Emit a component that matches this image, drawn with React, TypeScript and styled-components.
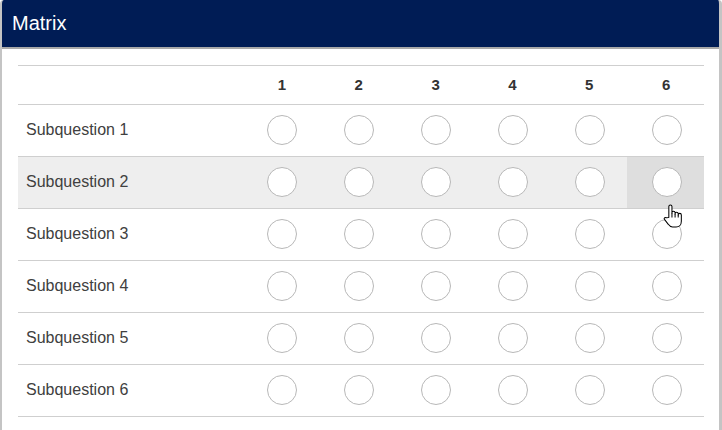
import React from "react";
import styled, { createGlobalStyle } from "styled-components";

const GlobalStyle = createGlobalStyle`
  html, body {
    margin: 0;
    padding: 0;
    background: #ffffff;
    font-family: "Liberation Sans", Arial, sans-serif;
  }
`;

const Panel = styled.div`
  width: 722px;
  height: 430px;
  box-sizing: border-box;
  border-left: 2px solid #c4c4c4;
  border-right: 3px solid #c4c4c4;
  border-radius: 4px 4px 0 0;
  overflow: hidden;
  background: #ffffff;
`;

const Header = styled.div`
  height: 47px;
  background: #001c55;
  border-bottom: 2px solid #a9a9a9;
  display: flex;
  align-items: center;
  padding-left: 10px;
  color: #ffffff;
  font-size: 20px;
`;

const Body = styled.div`
  padding: 16px 15px 0 16px;
`;

const Table = styled.table`
  width: 686px;
  border-collapse: collapse;
  table-layout: fixed;
  border-top: 1px solid #cfcfcf;
`;

const HeadCell = styled.th`
  height: 37px;
  font-size: 15px;
  font-weight: bold;
  color: #333333;
  text-align: center;
  vertical-align: middle;
  padding: 0 0 1px 1px;
  border-bottom: 1px solid #cfcfcf;
`;

const Row = styled.tr<{ $active?: boolean }>`
  background: ${({ $active }) => ($active ? "#eeeeee" : "transparent")};
`;

const LabelCell = styled.td`
  height: 49px;
  padding: 0 0 2px 8px;
  font-size: 16px;
  color: #404040;
  border-bottom: 1px solid #cfcfcf;
  vertical-align: middle;
`;

const ChoiceCell = styled.td<{ $hover?: boolean }>`
  position: relative;
  padding: 0;
  border-bottom: 1px solid #cfcfcf;
  background: ${({ $hover }) => ($hover ? "#dedede" : "transparent")};
`;

const ChoiceInner = styled.div`
  display: flex;
  align-items: center;
  justify-content: center;
  height: 51px;
  padding-left: 2px;
  padding-bottom: 2px;
  box-sizing: border-box;
`;

const Radio = styled.span`
  display: block;
  width: 28px;
  height: 28px;
  border-radius: 50%;
  border: 1px solid #b8b8b8;
  background: #ffffff;
`;

const Cursor = styled.svg`
  position: absolute;
  left: 36px;
  top: 47px;
  z-index: 2;
`;

const HandCursor = () => (
  <Cursor width="20" height="25" viewBox="0 0 19 24">
    <path
      d="M5.5 13 V2.5 a1.5 1.5 0 0 1 3 0 V9 V8.5 a1.5 1.5 0 0 1 3 0 V9.5 a1.5 1.5 0 0 1 3 0 V10.5 a1.5 1.5 0 0 1 3 0 V16.5 c0 3.2 -2 5.5 -5 5.5 h-3.5 c-2 0 -3 -1 -4 -2.5 L1.3 14.8 c-.8 -1.1 .4 -2.4 1.6 -1.6 Z"
      fill="#ffffff"
      stroke="#000000"
      strokeWidth="1"
      strokeLinejoin="round"
    />
    <path d="M8.5 9 V13 M11.5 9.5 V13 M14.5 10.5 V13" stroke="#000000" strokeWidth="1" />
  </Cursor>
);

const columns = [1, 2, 3, 4, 5, 6];
const rows = [1, 2, 3, 4, 5, 6];

export default function App() {
  return (
    <>
      <GlobalStyle />
      <Panel>
        <Header>Matrix</Header>
        <Body>
          <Table>
            <colgroup>
              <col style={{ width: 225 }} />
              {columns.map((c) => (
                <col key={c} />
              ))}
            </colgroup>
            <thead>
              <tr>
                <HeadCell />
                {columns.map((c) => (
                  <HeadCell key={c}>{c}</HeadCell>
                ))}
              </tr>
            </thead>
            <tbody>
              {rows.map((r) => (
                <Row key={r} $active={r === 2}>
                  <LabelCell>Subquestion {r}</LabelCell>
                  {columns.map((c) => {
                    const hover = r === 2 && c === 6;
                    return (
                      <ChoiceCell key={c} $hover={hover}>
                        <ChoiceInner>
                          <Radio />
                        </ChoiceInner>
                        {hover && <HandCursor />}
                      </ChoiceCell>
                    );
                  })}
                </Row>
              ))}
            </tbody>
          </Table>
        </Body>
      </Panel>
    </>
  );
}
